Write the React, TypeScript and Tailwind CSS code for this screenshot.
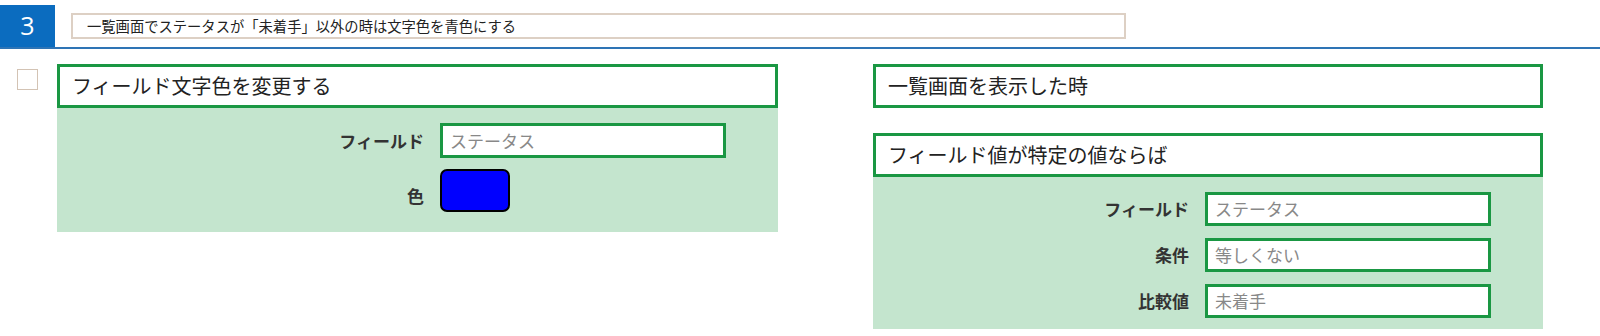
const JP = "font-['Meiryo','Noto_Sans_CJK_JP','Noto_Sans',sans-serif]";

function Field({ label, value, narrow }: { label: string; value: string; narrow?: boolean }) {
  return (
    <div className="flex items-center justify-end pr-[52px]">
      <span className="text-[17px] font-bold text-[#333] mr-[16px]">{label}</span>
      <div
        className={`w-[286px] ${narrow ? "h-[34px]" : "h-[35px]"} bg-white border-[3px] border-[#1a9743] flex items-center pl-[7px] text-[17px] text-[#888]`}
      >
        {value}
      </div>
    </div>
  );
}

function CardHead({ title }: { title: string }) {
  return (
    <div className="h-[44px] bg-white border-[3px] border-[#1a9743] flex items-center pl-[12px] text-[20px] text-[#222]">
      {title}
    </div>
  );
}

export default function App() {
  return (
    <div className={`w-[1600px] h-[336px] bg-white overflow-hidden ${JP}`}>
      {/* header bar */}
      <div className="flex items-center pt-[5px] border-b-2 border-[#2e74b5]">
        <div className="w-[55px] h-[42px] bg-[#0b6cbf] text-white flex items-center justify-center text-[25px] font-['Open_Sans',sans-serif]">
          3
        </div>
        <div className="ml-[16px] w-[1055px] h-[26px] border-2 border-[#ddd0c4] flex items-center pl-[14px] text-[14.3px] text-[#222]">
          一覧画面でステータスが「未着手」以外の時は文字色を青色にする
        </div>
      </div>

      <div className="flex items-start pt-[15px]">
        <div className="ml-[17px] mt-[5px] w-[21px] h-[21px] border border-[#d3c3b4] bg-white" />

        {/* left: action */}
        <div className="ml-[19px] w-[721px]">
          <CardHead title="フィールド文字色を変更する" />
          <div className="bg-[#c4e5ce] pt-[15px] pb-[20px] flex flex-col gap-[11px]">
            <Field label="フィールド" value="ステータス" />
            <div className="flex justify-end pr-[52px]">
              <span className="self-end mb-[4px] text-[17px] font-bold text-[#333] mr-[16px]">色</span>
              <div className="w-[70px] h-[43px] bg-[#0000ff] border-2 border-black rounded-[7px] mr-[216px]" />
            </div>
          </div>
        </div>

        {/* right: trigger + condition */}
        <div className="ml-[95px] w-[670px] flex flex-col">
          <CardHead title="一覧画面を表示した時" />
          <div className="mt-[25px]">
            <CardHead title="フィールド値が特定の値ならば" />
          </div>
          <div className="bg-[#c4e5ce] pt-[15px] pb-[11px] flex flex-col gap-[12px]">
            <Field label="フィールド" value="ステータス" narrow />
            <Field label="条件" value="等しくない" narrow />
            <Field label="比較値" value="未着手" narrow />
          </div>
        </div>
      </div>
    </div>
  );
}
